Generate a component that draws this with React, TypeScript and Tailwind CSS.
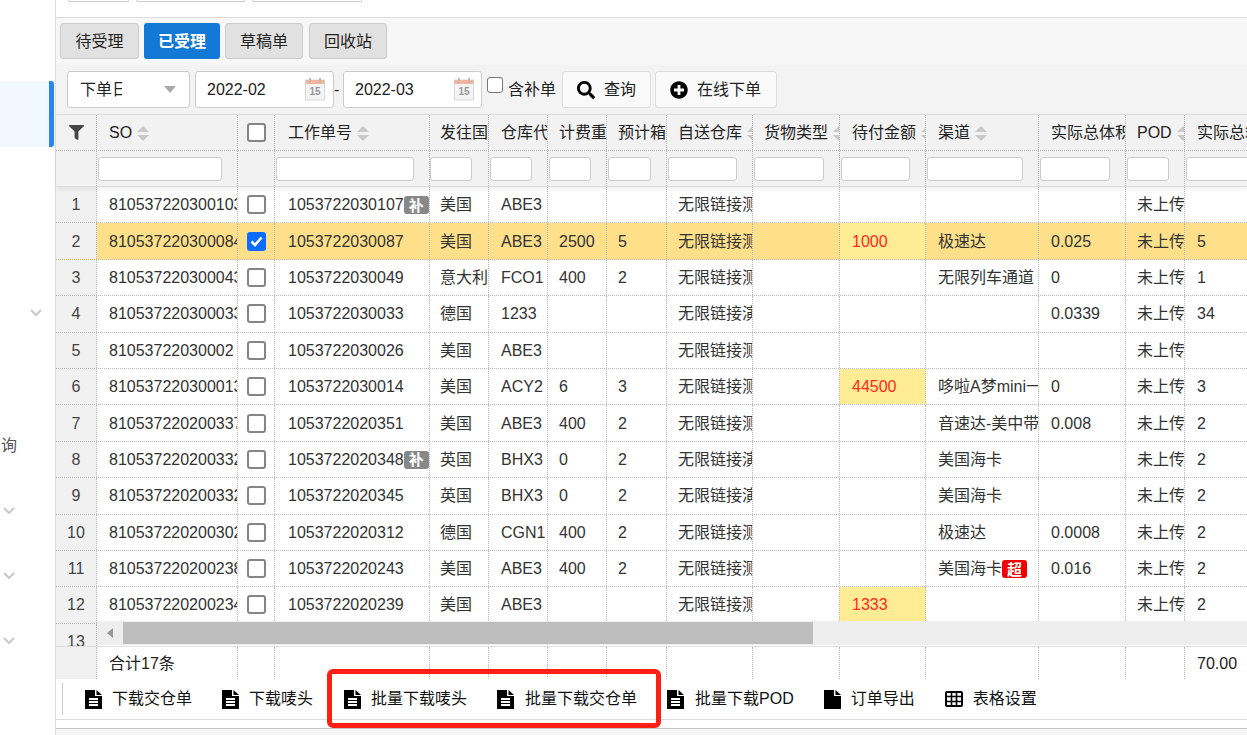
import { FaFilter, FaPlusCircle, FaSearch } from 'react-icons/fa';

type RowData = {
  so: string;
  work: string;
  tag?: boolean;
  country: string;
  wh: string;
  weight?: string;
  boxes?: string;
  self: string;
  due?: string;
  dueMark?: boolean;
  channel?: string;
  over?: boolean;
  volume?: string;
  total?: string;
};

const rows: RowData[] = [
  { so: '810537220300103', work: '1053722030107', tag: true, country: '美国', wh: 'ABE3', self: '无限链接测试' },
  { so: '810537220300084', work: '1053722030087', country: '美国', wh: 'ABE3', weight: '2500', boxes: '5', self: '无限链接测试', due: '1000', channel: '极速达', volume: '0.025', total: '5' },
  { so: '810537220300043', work: '1053722030049', country: '意大利', wh: 'FCO1', weight: '400', boxes: '2', self: '无限链接测试', channel: '无限列车通道', volume: '0', total: '1' },
  { so: '810537220300033', work: '1053722030033', country: '德国', wh: '1233', self: '无限链接演示', volume: '0.0339', total: '34' },
  { so: '81053722030002', work: '1053722030026', country: '美国', wh: 'ABE3', self: '无限链接测试' },
  { so: '810537220300013', work: '1053722030014', country: '美国', wh: 'ACY2', weight: '6', boxes: '3', self: '无限链接测试', due: '44500', dueMark: true, channel: '哆啦A梦mini一号', volume: '0', total: '3' },
  { so: '810537220200337', work: '1053722020351', country: '美国', wh: 'ABE3', weight: '400', boxes: '2', self: '无限链接测试', channel: '音速达-美中带电', volume: '0.008', total: '2' },
  { so: '810537220200332', work: '1053722020348', tag: true, country: '英国', wh: 'BHX3', weight: '0', boxes: '2', self: '无限链接演示', channel: '美国海卡', total: '2' },
  { so: '810537220200332', work: '1053722020345', country: '英国', wh: 'BHX3', weight: '0', boxes: '2', self: '无限链接演示', channel: '美国海卡', total: '2' },
  { so: '810537220200302', work: '1053722020312', country: '德国', wh: 'CGN1', weight: '400', boxes: '2', self: '无限链接测试', channel: '极速达', volume: '0.0008', total: '2' },
  { so: '810537220200238', work: '1053722020243', country: '美国', wh: 'ABE3', weight: '400', boxes: '2', self: '无限链接测试', channel: '美国海卡', over: true, volume: '0.016', total: '2' },
  { so: '810537220200234', work: '1053722020239', country: '美国', wh: 'ABE3', self: '无限链接测试', due: '1333', dueMark: true, total: '2' },
];

// column widths, in the order of the table
const w = {
  num: 'w-[41px]',
  so: 'w-[141px]',
  check: 'w-[37px]',
  work: 'w-[155px]',
  country: 'w-[59px]',
  wh: 'w-[59px]',
  weight: 'w-[59px]',
  boxes: 'w-[60px]',
  self: 'w-[86px]',
  kind: 'w-[87px]',
  due: 'w-[86px]',
  channel: 'w-[113px]',
  volume: 'w-[87px]',
  pod: 'w-[59px]',
  total: 'w-[100px]',
};

// left padding of the text in each column
const pad = {
  so: 'pl-[12px]',
  work: 'pl-[13px]',
  country: 'pl-[10px]',
  wh: 'pl-[12px]',
  weight: 'pl-[11px]',
  boxes: 'pl-[11px]',
  self: 'pl-[11px]',
  kind: 'pl-[11px]',
  due: 'pl-[12px]',
  channel: 'pl-[12px]',
  volume: 'pl-[12px]',
  pod: 'pl-[11px]',
  total: 'pl-[12px]',
};

const dataCols = [w.so, w.check, w.work, w.country, w.wh, w.weight, w.boxes, w.self, w.kind, w.due, w.channel, w.volume, w.pod, w.total];

function Sort() {
  return (
    <svg width="12" height="15" viewBox="0 0 12 15" className="ml-[5px] shrink-0 fill-[#c9c9c9]">
      <path d="M6 0 12 6H0Z" />
      <path d="M0 9H12L6 15Z" />
    </svg>
  );
}

function Chevron({ className }: { className: string }) {
  return (
    <svg width="12" height="8" viewBox="0 0 12 8" className={`fill-none stroke-[#c8c8c8] stroke-2 ${className}`}>
      <path d="M1 1 6 6 11 1" />
    </svg>
  );
}

function CalendarIcon() {
  return (
    <svg width="20" height="23" viewBox="0 0 20 23" className="shrink-0">
      <rect x="0.5" y="2" width="19" height="20" fill="#f4f4f4" stroke="#d8d8d8" />
      <rect x="0.5" y="2" width="19" height="4" fill="#f3b39c" />
      <rect x="4" y="0" width="2" height="5" fill="#bbb" />
      <rect x="14" y="0" width="2" height="5" fill="#bbb" />
      <text x="10" y="17" textAnchor="middle" fontSize="10" fontWeight="bold" fill="#999" fontFamily="Liberation Sans">15</text>
    </svg>
  );
}

function DocIcon({ lines = true }: { lines?: boolean }) {
  return (
    <svg width="17" height="19" viewBox="0 0 17 19" className="shrink-0">
      <path d="M0 0H10V6H17V19H0Z" fill="#000" />
      <path d="M11.5 0 17 5H11.5Z" fill="#000" />
      {lines && (
        <g fill="#fff">
          <rect x="4" y="8" width="9" height="2" />
          <rect x="4" y="11" width="9" height="2" />
          <rect x="4" y="14" width="9" height="2" />
        </g>
      )}
    </svg>
  );
}

function TableIcon() {
  return (
    <svg width="18" height="16" viewBox="0 0 18 16" className="shrink-0 fill-none stroke-black">
      <rect x="1" y="1" width="16" height="14" rx="1" strokeWidth="2" />
      <path d="M0 5.5H18M0 10.5H18M6.5 1V15M11.5 1V15" strokeWidth="1.6" />
    </svg>
  );
}

function Checkbox({ checked = false }: { checked?: boolean }) {
  if (checked) {
    return (
      <span className="flex h-[19px] w-[19px] items-center justify-center rounded-[3px] bg-[#0b6cff]">
        <svg width="13" height="11" viewBox="0 0 13 11" className="fill-none stroke-white stroke-[2.6]">
          <path d="M1.5 5.5 5 9 11.5 1.5" />
        </svg>
      </span>
    );
  }
  return <span className="h-[19px] w-[19px] rounded-[3px] border-2 border-[#858585] bg-white" />;
}

function HeadCell({ width, label, sort = false }: { width: string; label: string; sort?: boolean }) {
  return (
    <div className={`${width} flex shrink-0 items-center overflow-hidden whitespace-nowrap border-r border-dotted border-[#bbb] pt-px text-[#222]`}>
      {label}
      {sort && <Sort />}
    </div>
  );
}

function Cell({ width, children, className = '' }: { width: string; children?: React.ReactNode; className?: string }) {
  return (
    <div className={`${width} flex shrink-0 items-center overflow-hidden whitespace-nowrap border-r border-dotted border-[#bbb] pt-px ${className}`}>
      {children}
    </div>
  );
}

function Badge({ text, color }: { text: string; color: string }) {
  return (
    <span className={`flex h-[18px] w-[25px] shrink-0 items-center justify-center rounded-[3px] text-[15px] font-bold leading-none text-white ${color}`}>
      {text}
    </span>
  );
}

function ToolItem({ icon, label, className = 'ml-[30px] gap-[10px]' }: { icon: React.ReactNode; label: string; className?: string }) {
  return (
    <div className={`flex items-center whitespace-nowrap text-[#111] ${className}`}>
      {icon}
      <span>{label}</span>
    </div>
  );
}

export default function App() {
  return (
    <div className="relative flex h-[735px] w-[1247px] overflow-hidden bg-white text-[16px] text-[#333] [font-family:'Liberation_Sans','Noto_Sans_CJK_SC',sans-serif]">
      {/* sidebar */}
      <aside className="flex w-[56px] shrink-0 flex-col border-r border-[#ddd] bg-white">
        <div className="mt-[81px] h-[66px] w-[54px] rounded-r-[3px] border-r-[5px] border-[#2a87e8] bg-[#f2f8ff]" />
        <Chevron className="ml-[30px] mt-[162px]" />
        <span className="-ml-[1px] mt-[117px] w-[18px] overflow-hidden text-right text-[#555]">询</span>
        <Chevron className="ml-[3px] mt-[49px]" />
        <Chevron className="ml-[3px] mt-[57px]" />
        <Chevron className="ml-[3px] mt-[57px]" />
      </aside>

      <main className="flex min-w-0 flex-1 flex-col">
        {/* top strip */}
        <div className="flex h-[18px] shrink-0 gap-[7px] border-b border-[#ddd] pl-[12px]">
          <div className="h-[2px] w-[61px] rounded-b-[2px] border border-t-0 border-[#ccc]" />
          <div className="h-[2px] w-[109px] rounded-b-[2px] border border-t-0 border-[#ccc]" />
          <div className="h-[2px] w-[110px] rounded-b-[2px] border border-t-0 border-[#ccc]" />
        </div>

        {/* tabs */}
        <div className="flex h-[47px] shrink-0 items-start gap-[5px] bg-[#f7f7f7] pl-[4px] pt-[5px]">
          <button className="h-[36px] w-[79px] rounded-[3px] border border-[#ccc] bg-[#e1e1e1] pt-px text-[#222]">待受理</button>
          <button className="h-[36px] w-[76px] rounded-[3px] bg-[#1279d6] pt-px font-bold text-white">已受理</button>
          <button className="h-[36px] w-[78px] rounded-[3px] border border-[#ccc] bg-[#e1e1e1] pt-px text-[#222]">草稿单</button>
          <button className="ml-px h-[36px] w-[78px] rounded-[3px] border border-[#ccc] bg-[#e1e1e1] pt-px text-[#222]">回收站</button>
        </div>

        {/* filter bar */}
        <div className="flex h-[49px] shrink-0 items-start bg-[#f3f3f3] pl-[11px] pt-[6px] text-[#222]">
          <div className="flex h-[37px] w-[123px] items-center justify-between rounded-[3px] border border-[#ccc] bg-white pl-[12px] pr-[13px]">
            <span className="w-[42px] overflow-hidden whitespace-nowrap">下单日期</span>
            <span className="h-0 w-0 border-x-[6px] border-t-[7px] border-x-transparent border-t-[#aaa]" />
          </div>
          <div className="ml-[5px] flex h-[37px] w-[139px] items-center justify-between rounded-[3px] border border-[#ccc] bg-white pl-[11px] pr-[8px]">
            <span>2022-02</span>
            <CalendarIcon />
          </div>
          <span className="flex h-[37px] w-[9px] items-center">-</span>
          <div className="flex h-[37px] w-[139px] items-center justify-between rounded-[3px] border border-[#ccc] bg-white pl-[11px] pr-[7px]">
            <span>2022-03</span>
            <CalendarIcon />
          </div>
          <span className="ml-[5px] mt-[6px] h-[16px] w-[16px] rounded-[3px] border border-[#777] bg-white" />
          <span className="ml-[5px] flex h-[37px] items-center whitespace-nowrap">含补单</span>
          <button className="ml-[6px] flex h-[37px] w-[89px] items-center gap-[9px] rounded-[3px] border border-[#ddd] bg-[#fafafa] pl-[14px]">
            <FaSearch className="text-[18px] text-black" />
            查询
          </button>
          <button className="ml-[4px] flex h-[37px] w-[122px] items-center gap-[9px] rounded-[3px] border border-[#ddd] bg-[#fafafa] pl-[14px]">
            <FaPlusCircle className="text-[18px] text-black" />
            在线下单
          </button>
        </div>

        {/* table header */}
        <div className="relative z-10 shrink-0 border-b border-[#ddd] bg-[#f2f2f2] shadow-[0_2px_5px_rgba(0,0,0,0.07)]">
          <div className="flex h-[37px] border-b border-t border-dotted border-[#bbb] border-t-[#ddd] [border-top-style:solid]">
            <div className={`${w.num} flex shrink-0 items-center justify-center border-r border-dotted border-[#bbb]`}>
              <FaFilter className="text-[15px] text-[#444]" />
            </div>
            <HeadCell width={`${w.so} ${pad.so}`} label="SO" sort />
            <div className={`${w.check} flex shrink-0 items-center justify-center border-r border-dotted border-[#bbb]`}>
              <Checkbox />
            </div>
            <HeadCell width={`${w.work} ${pad.work}`} label="工作单号" sort />
            <HeadCell width={`${w.country} ${pad.country}`} label="发往国家" />
            <HeadCell width={`${w.wh} ${pad.wh}`} label="仓库代码" />
            <HeadCell width={`${w.weight} ${pad.weight}`} label="计费重量" />
            <HeadCell width={`${w.boxes} ${pad.boxes}`} label="预计箱数" />
            <HeadCell width={`${w.self} ${pad.self}`} label="自送仓库" sort />
            <HeadCell width={`${w.kind} ${pad.kind}`} label="货物类型" sort />
            <HeadCell width={`${w.due} ${pad.due}`} label="待付金额" sort />
            <HeadCell width={`${w.channel} ${pad.channel}`} label="渠道" sort />
            <HeadCell width={`${w.volume} ${pad.volume}`} label="实际总体积" />
            <HeadCell width={`${w.pod} ${pad.pod}`} label="POD" sort />
            <HeadCell width={`${w.total} ${pad.total}`} label="实际总箱数" />
          </div>
          <div className="flex h-[35px]">
            <div className={`${w.num} shrink-0 border-r border-dotted border-[#bbb]`} />
            {dataCols.map((col, i) => (
              <div
                key={i}
                className={`${col} flex shrink-0 items-center border-r border-dotted border-[#bbb] ${i === 3 ? 'pr-[16px]' : 'pl-px pr-[15px]'}`}
              >
                {i !== 1 && <input className="h-[24px] w-full min-w-0 rounded-[3px] border border-[#ccc] bg-white" />}
              </div>
            ))}
          </div>
        </div>

        {/* table body */}
        <div className="relative h-[460px] shrink-0 overflow-hidden border-b border-[#ddd]">
          {rows.map((r, i) => {
            const picked = r.so === '810537220300084';
            return (
              <div key={i} className={`flex h-[36.4px] border-b border-dotted border-[#bbb] ${picked ? 'bg-[#ffe08a]' : 'bg-white'}`}>
                <div className={`${w.num} flex shrink-0 items-center justify-center border-r border-dotted border-[#bbb] bg-[#f1f1f1] pt-px text-[#444]`}>
                  {i + 1}
                </div>
                <Cell width={`${w.so} ${pad.so}`}>{r.so}</Cell>
                <div className={`${w.check} flex shrink-0 items-center justify-center border-r border-dotted border-[#bbb]`}>
                  <Checkbox checked={picked} />
                </div>
                <Cell width={`${w.work} ${pad.work}`}>
                  {r.work}
                  {r.tag && <Badge text="补" color="bg-[#888]" />}
                </Cell>
                <Cell width={`${w.country} ${pad.country}`}>{r.country}</Cell>
                <Cell width={`${w.wh} ${pad.wh}`}>{r.wh}</Cell>
                <Cell width={`${w.weight} ${pad.weight}`}>{r.weight}</Cell>
                <Cell width={`${w.boxes} ${pad.boxes}`}>{r.boxes}</Cell>
                <Cell width={`${w.self} ${pad.self}`}>{r.self}</Cell>
                <Cell width={`${w.kind} ${pad.kind}`} />
                <Cell width={`${w.due} ${pad.due}`} className={`text-[#ff2a1f] ${r.dueMark || picked ? 'bg-[#ffec94]' : ''}`}>
                  {r.due}
                </Cell>
                <Cell width={`${w.channel} ${pad.channel}`}>
                  {r.channel}
                  {r.over && <Badge text="超" color="bg-[#f00000]" />}
                </Cell>
                <Cell width={`${w.volume} ${pad.volume}`}>{r.volume}</Cell>
                <Cell width={`${w.pod} ${pad.pod}`}>未上传</Cell>
                <Cell width={`${w.total} ${pad.total}`}>{r.total}</Cell>
              </div>
            );
          })}
          <div className={`${w.num} flex h-[36.4px] items-center justify-center border-r border-dotted border-[#bbb] bg-[#f1f1f1] text-[#444]`}>
            13
          </div>

          {/* horizontal scrollbar */}
          <div className="absolute bottom-px left-[41px] right-0 flex h-[24px] items-center bg-[#eee]">
            <span className="ml-[10px] h-0 w-0 border-y-[5px] border-r-[6px] border-y-transparent border-r-[#999]" />
            <div className="ml-[10px] h-[22px] w-[690px] bg-[#bebebe]" />
          </div>
        </div>

        {/* totals */}
        <div className="flex h-[32px] shrink-0">
          <div className={`${w.num} shrink-0 border-r border-dotted border-[#bbb] bg-[#f1f1f1]`} />
          {dataCols.map((col, i) => (
            <Cell key={i} width={`${col} pl-[12px]`} className="text-[#222]">
              {i === 0 ? '合计17条' : i === 13 ? '70.00' : null}
            </Cell>
          ))}
        </div>

        {/* toolbar */}
        <div className="flex h-[41px] shrink-0 items-center border-b border-[#ddd] pl-[6px]">
          <div className="h-[32px] w-px bg-[#ccc]" />
          <ToolItem className="ml-[22px] gap-[10px]" icon={<DocIcon />} label="下载交仓单" />
          <ToolItem icon={<DocIcon />} label="下载唛头" />
          <ToolItem className="ml-[31px] gap-[10px]" icon={<DocIcon />} label="批量下载唛头" />
          <ToolItem className="ml-[30px] gap-[11px]" icon={<DocIcon />} label="批量下载交仓单" />
          <ToolItem className="ml-[30px] gap-[11px]" icon={<DocIcon />} label="批量下载POD" />
          <ToolItem icon={<DocIcon lines={false} />} label="订单导出" />
          <ToolItem icon={<TableIcon />} label="表格设置" />
        </div>
        <div className="h-[9px] shrink-0 border-b border-[#c4c4c4]" />
        <div className="flex-1 bg-[#f5f5f5]" />
      </main>

      {/* red marker drawn over the toolbar */}
      <div className="absolute left-[327px] top-[669px] h-[59px] w-[334px] rounded-[6px] border-[5px] border-[#ff2015]" />
    </div>
  );
}
